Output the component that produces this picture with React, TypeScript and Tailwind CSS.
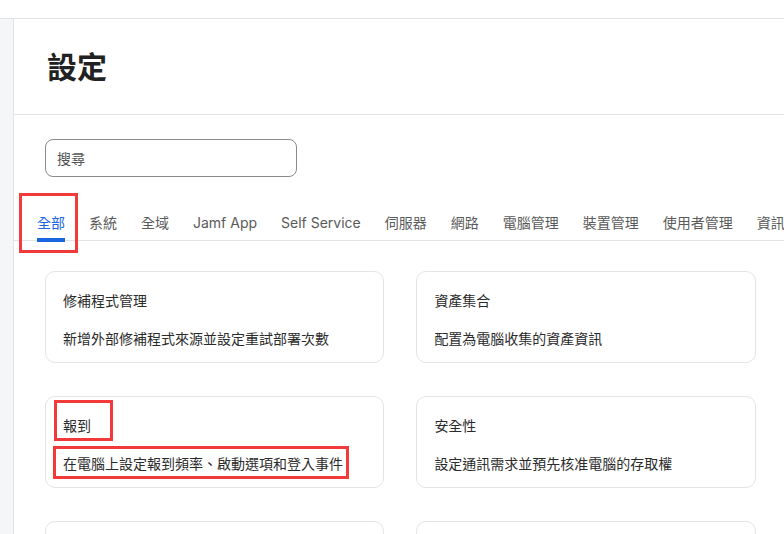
import React from "react";

const tabs = ["全部", "系統", "全域", "Jamf App", "Self Service", "伺服器", "網路", "電腦管理", "裝置管理", "使用者管理", "資訊"];

function Card({ title, desc, mark }: { title: string; desc: string; mark?: boolean }) {
  return (
    <div className="relative h-[92px] rounded-[10px] border border-[#e3e4e6] bg-white pl-[17px] pt-[19px]">
      <div className="relative text-[14px] leading-[20px] text-[#2b2b2b]">
        {title}
        {mark && <div className="absolute left-[-9px] top-[-16px] h-[41px] w-[59px] border-[3px] border-[#f23a3a]" />}
      </div>
      <div className="relative mt-[18px] text-[14px] leading-[20px] text-[#2b2b2b]">
        {desc}
        {mark && <div className="absolute left-[-10px] top-[-8px] h-[33px] w-[296px] border-[3px] border-[#f23a3a]" />}
      </div>
    </div>
  );
}

export default function App() {
  return (
    <div
      className="h-[534px] w-[784px] overflow-hidden bg-white"
      style={{ fontFamily: 'Inter, "Noto Sans CJK TC", sans-serif' }}
    >
      <div className="h-[19px] border-b border-[#e2e3e5] bg-white" />
      <div className="flex h-[515px]">
        <div className="w-[14px] shrink-0 border-r border-[#e2e3e5] bg-[#f5f6f8]" />
        <div className="flex-1">
          <div className="flex h-[96px] items-center border-b border-[#e2e3e5] pl-[33px]">
            <h1 className="text-[30px] font-semibold leading-none text-[#222]">設定</h1>
          </div>
          <div className="pl-[31px] pt-[24px]">
            <div className="flex h-[38px] w-[252px] items-center rounded-[8px] border border-[#8a8a8a] pl-[11px] text-[14px] text-[#555]">
              搜尋
            </div>
          </div>
          <div className="mt-[25px] flex h-[39px] gap-6 border-b border-[#e2e3e5] pl-[23px] whitespace-nowrap">
            {tabs.map((t, i) => (
              <div key={t} className="relative flex h-full flex-col justify-start pt-[11px]">
                <span className={`text-[14px] leading-[20px] ${i === 0 ? "text-[#1a66e0]" : "text-[#5a5a5a]"}`}>{t}</span>
                {i === 0 && <div className="absolute bottom-[-2px] left-0 right-0 h-[4px] bg-[#1a66e0]" />}
                {i === 0 && <div className="absolute left-[-18px] top-[-9px] h-[60px] w-[59px] border-[3px] border-[#f23a3a]" />}
              </div>
            ))}
          </div>
          <div className="grid grid-cols-2 gap-x-[32px] gap-y-[33px] pl-[31px] pr-[29px] pt-[30px]">
            <Card title="修補程式管理" desc="新增外部修補程式來源並設定重試部署次數" />
            <Card title="資產集合" desc="配置為電腦收集的資產資訊" />
            <Card title="報到" desc="在電腦上設定報到頻率、啟動選項和登入事件" mark />
            <Card title="安全性" desc="設定通訊需求並預先核准電腦的存取權" />
            <Card title="" desc="" />
            <Card title="" desc="" />
          </div>
        </div>
      </div>
    </div>
  );
}
